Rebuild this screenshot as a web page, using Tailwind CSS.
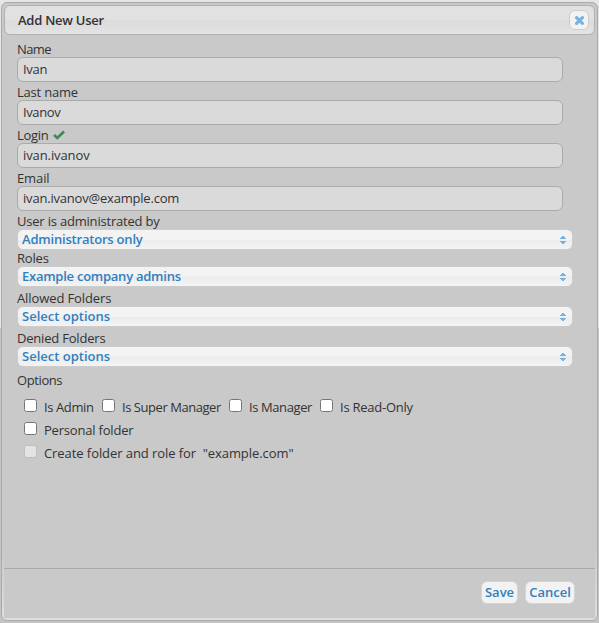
<!DOCTYPE html>
<html lang="en">
<head>
<meta charset="utf-8">
<title>Add New User</title>
<script src="https://cdn.jsdelivr.net/npm/@tailwindcss/browser@4"></script>
</head>
<body class="w-[599px] h-[623px] overflow-hidden bg-[linear-gradient(#e6e6e6_0px,#e6e6e6_328px,#c4c4c4_328px)] pt-[2px] pl-[1px] font-['Trebuchet_MS','Open_Sans',sans-serif] text-[13px] text-[#333333]">
<svg class="hidden">
  <symbol id="sort" viewBox="0 0 6 8"><path d="M2 0H4V1H5V2H6V3H0V2H1V1H2ZM0 5H6V6H5V7H4V8H2V7H1V6H0Z" fill="#72b2e4"/></symbol>
</svg>
<div class="w-[597px] h-[619px] border border-[#aaaaaa] rounded-[6px] p-[2px] flex flex-col bg-[linear-gradient(#c9c9c9_0%,#c9c9c9_88%,#dedede_100%)]">
  <header class="h-[30px] shrink-0 border border-[#b0b0b0] rounded-[6px] bg-[linear-gradient(#e1e1e1_0%,#e1e1e1_50%,#dbdbdb_50%,#e3e3e3_100%)] flex items-center justify-between pl-[13px] pr-[5px]">
    <h1 class="text-[13px] leading-[18px] font-semibold tracking-[-0.25px]">Add New User</h1>
    <button class="size-[20px] border border-[#cccccc] rounded-[6px] bg-[#f2f2f2] flex items-center justify-center" aria-label="Close">
      <svg class="size-[9px]" viewBox="0 0 9 9"><path d="M1.6 1.6L7.4 7.4M7.4 1.6L1.6 7.4" stroke="#72b2e4" stroke-width="3.1" stroke-linecap="round"/></svg>
    </button>
  </header>
  <main class="grow bg-[#c9c9c9] pl-[13px] pt-[4px] border-b border-[#aaaaaa] tracking-[-0.2px]">
    <label class="block h-[18px] pt-[1px] leading-[18px] tracking-[-0.6px]">Name</label>
    <div class="w-[546px] h-[25px] border border-[#aaaaaa] rounded-[6px] bg-[#dadada] pl-[5px] leading-[23px] tracking-[-0.3px]">Ivan</div>
    <label class="block h-[18px] pt-[1px] leading-[18px]">Last name</label>
    <div class="w-[546px] h-[25px] border border-[#aaaaaa] rounded-[6px] bg-[#dadada] pl-[5px] leading-[23px] tracking-[-0.4px]">Ivanov</div>
    <label class="flex items-center h-[18px] pt-[1px] leading-[18px] gap-[5px] tracking-[-0.3px]">Login
      <svg class="w-[12px] h-[10px]" viewBox="0 0 12 10"><path d="M1 5L4.3 8L11 1.5" fill="none" stroke="#3a8c55" stroke-width="2.7"/></svg></label>
    <div class="w-[546px] h-[25px] border border-[#aaaaaa] rounded-[6px] bg-[#dadada] pl-[5px] leading-[23px] tracking-[-0.1px]">ivan.ivanov</div>
    <label class="block h-[18px] pt-[1px] leading-[18px] tracking-[-0.1px]">Email</label>
    <div class="w-[546px] h-[25px] border border-[#aaaaaa] rounded-[6px] bg-[#dadada] pl-[5px] leading-[23px]">ivan.ivanov@example.com</div>
    <label class="block h-[18px] pt-[1px] leading-[18px]">User is administrated by</label>
    <div class="w-[556px] h-[21px] border border-[#cccccc] rounded-[6px] bg-[linear-gradient(#f3f3f3_0%,#f3f3f3_50%,#ececec_50%,#f3f3f3_100%)] pl-[4px] pr-[6px] flex items-center justify-between leading-[19px] font-semibold text-[#3080bf]">Administrators only<svg class="w-[6px] h-[8px]"><use href="#sort"/></svg></div>
    <label class="block h-[16px] leading-[17px]">Roles</label>
    <div class="w-[556px] h-[21px] border border-[#cccccc] rounded-[6px] bg-[linear-gradient(#f3f3f3_0%,#f3f3f3_50%,#ececec_50%,#f3f3f3_100%)] pl-[4px] pr-[6px] flex items-center justify-between leading-[19px] font-semibold text-[#3080bf] tracking-[-0.25px]">Example company admins<svg class="w-[6px] h-[8px]"><use href="#sort"/></svg></div>
    <label class="block h-[19px] pt-[2px] leading-[18px] tracking-[-0.1px]">Allowed Folders</label>
    <div class="w-[556px] h-[21px] border border-[#cccccc] rounded-[6px] bg-[linear-gradient(#f3f3f3_0%,#f3f3f3_50%,#ececec_50%,#f3f3f3_100%)] pl-[4px] pr-[6px] flex items-center justify-between leading-[19px] font-semibold text-[#3080bf] tracking-normal">Select options<svg class="w-[6px] h-[8px]"><use href="#sort"/></svg></div>
    <label class="block h-[19px] pt-[2px] leading-[18px]">Denied Folders</label>
    <div class="w-[556px] h-[21px] border border-[#cccccc] rounded-[6px] bg-[linear-gradient(#f3f3f3_0%,#f3f3f3_50%,#ececec_50%,#f3f3f3_100%)] pl-[4px] pr-[6px] flex items-center justify-between leading-[19px] font-semibold text-[#3080bf] tracking-normal">Select options<svg class="w-[6px] h-[8px]"><use href="#sort"/></svg></div>
    <div class="h-[30px] pt-[4px] leading-[18px] tracking-[-0.4px]">Options</div>
    <div class="h-[23px] pl-[7px] flex">
      <label class="w-[78px] flex gap-[7px] leading-[20px] whitespace-nowrap tracking-[-0.4px]"><i class="size-[13px] shrink-0 mt-[2px] border border-[#767676] rounded-[2.5px] bg-white"></i>Is Admin</label>
      <label class="w-[127px] flex gap-[7px] leading-[20px] whitespace-nowrap tracking-[-0.45px]"><i class="size-[13px] shrink-0 mt-[2px] border border-[#767676] rounded-[2.5px] bg-white"></i>Is Super Manager</label>
      <label class="w-[91px] flex gap-[7px] leading-[20px] whitespace-nowrap tracking-[-0.4px]"><i class="size-[13px] shrink-0 mt-[2px] border border-[#767676] rounded-[2.5px] bg-white"></i>Is Manager</label>
      <label class="flex gap-[7px] leading-[20px] whitespace-nowrap tracking-[-0.25px]"><i class="size-[13px] shrink-0 mt-[2px] border border-[#767676] rounded-[2.5px] bg-white"></i>Is Read-Only</label>
    </div>
    <label class="h-[23px] pl-[7px] flex gap-[7px] leading-[20px]"><i class="size-[13px] shrink-0 mt-[2px] border border-[#767676] rounded-[2.5px] bg-white"></i>Personal folder</label>
    <label class="h-[23px] pl-[7px] flex gap-[7px] leading-[20px] whitespace-pre tracking-[-0.07px]"><i class="size-[13px] shrink-0 mt-[2px] border border-[#bdbdbd] rounded-[2.5px] bg-[#e3e3e3]"></i>Create folder and role for  "example.com"</label>
  </main>
  <footer class="h-[49px] shrink-0 bg-[#c9c9c9] flex gap-[7px] justify-end pt-[12px] pr-[20px] text-[#3080bf] font-semibold">
    <button class="w-[37px] h-[23px] border border-[#d4d4d4] rounded-[6px] bg-[#f2f2f2] flex items-center justify-center">Save</button>
    <button class="w-[50px] h-[23px] border border-[#d4d4d4] rounded-[6px] bg-[#f2f2f2] flex items-center justify-center">Cancel</button>
  </footer>
</div>
</body>
</html>
